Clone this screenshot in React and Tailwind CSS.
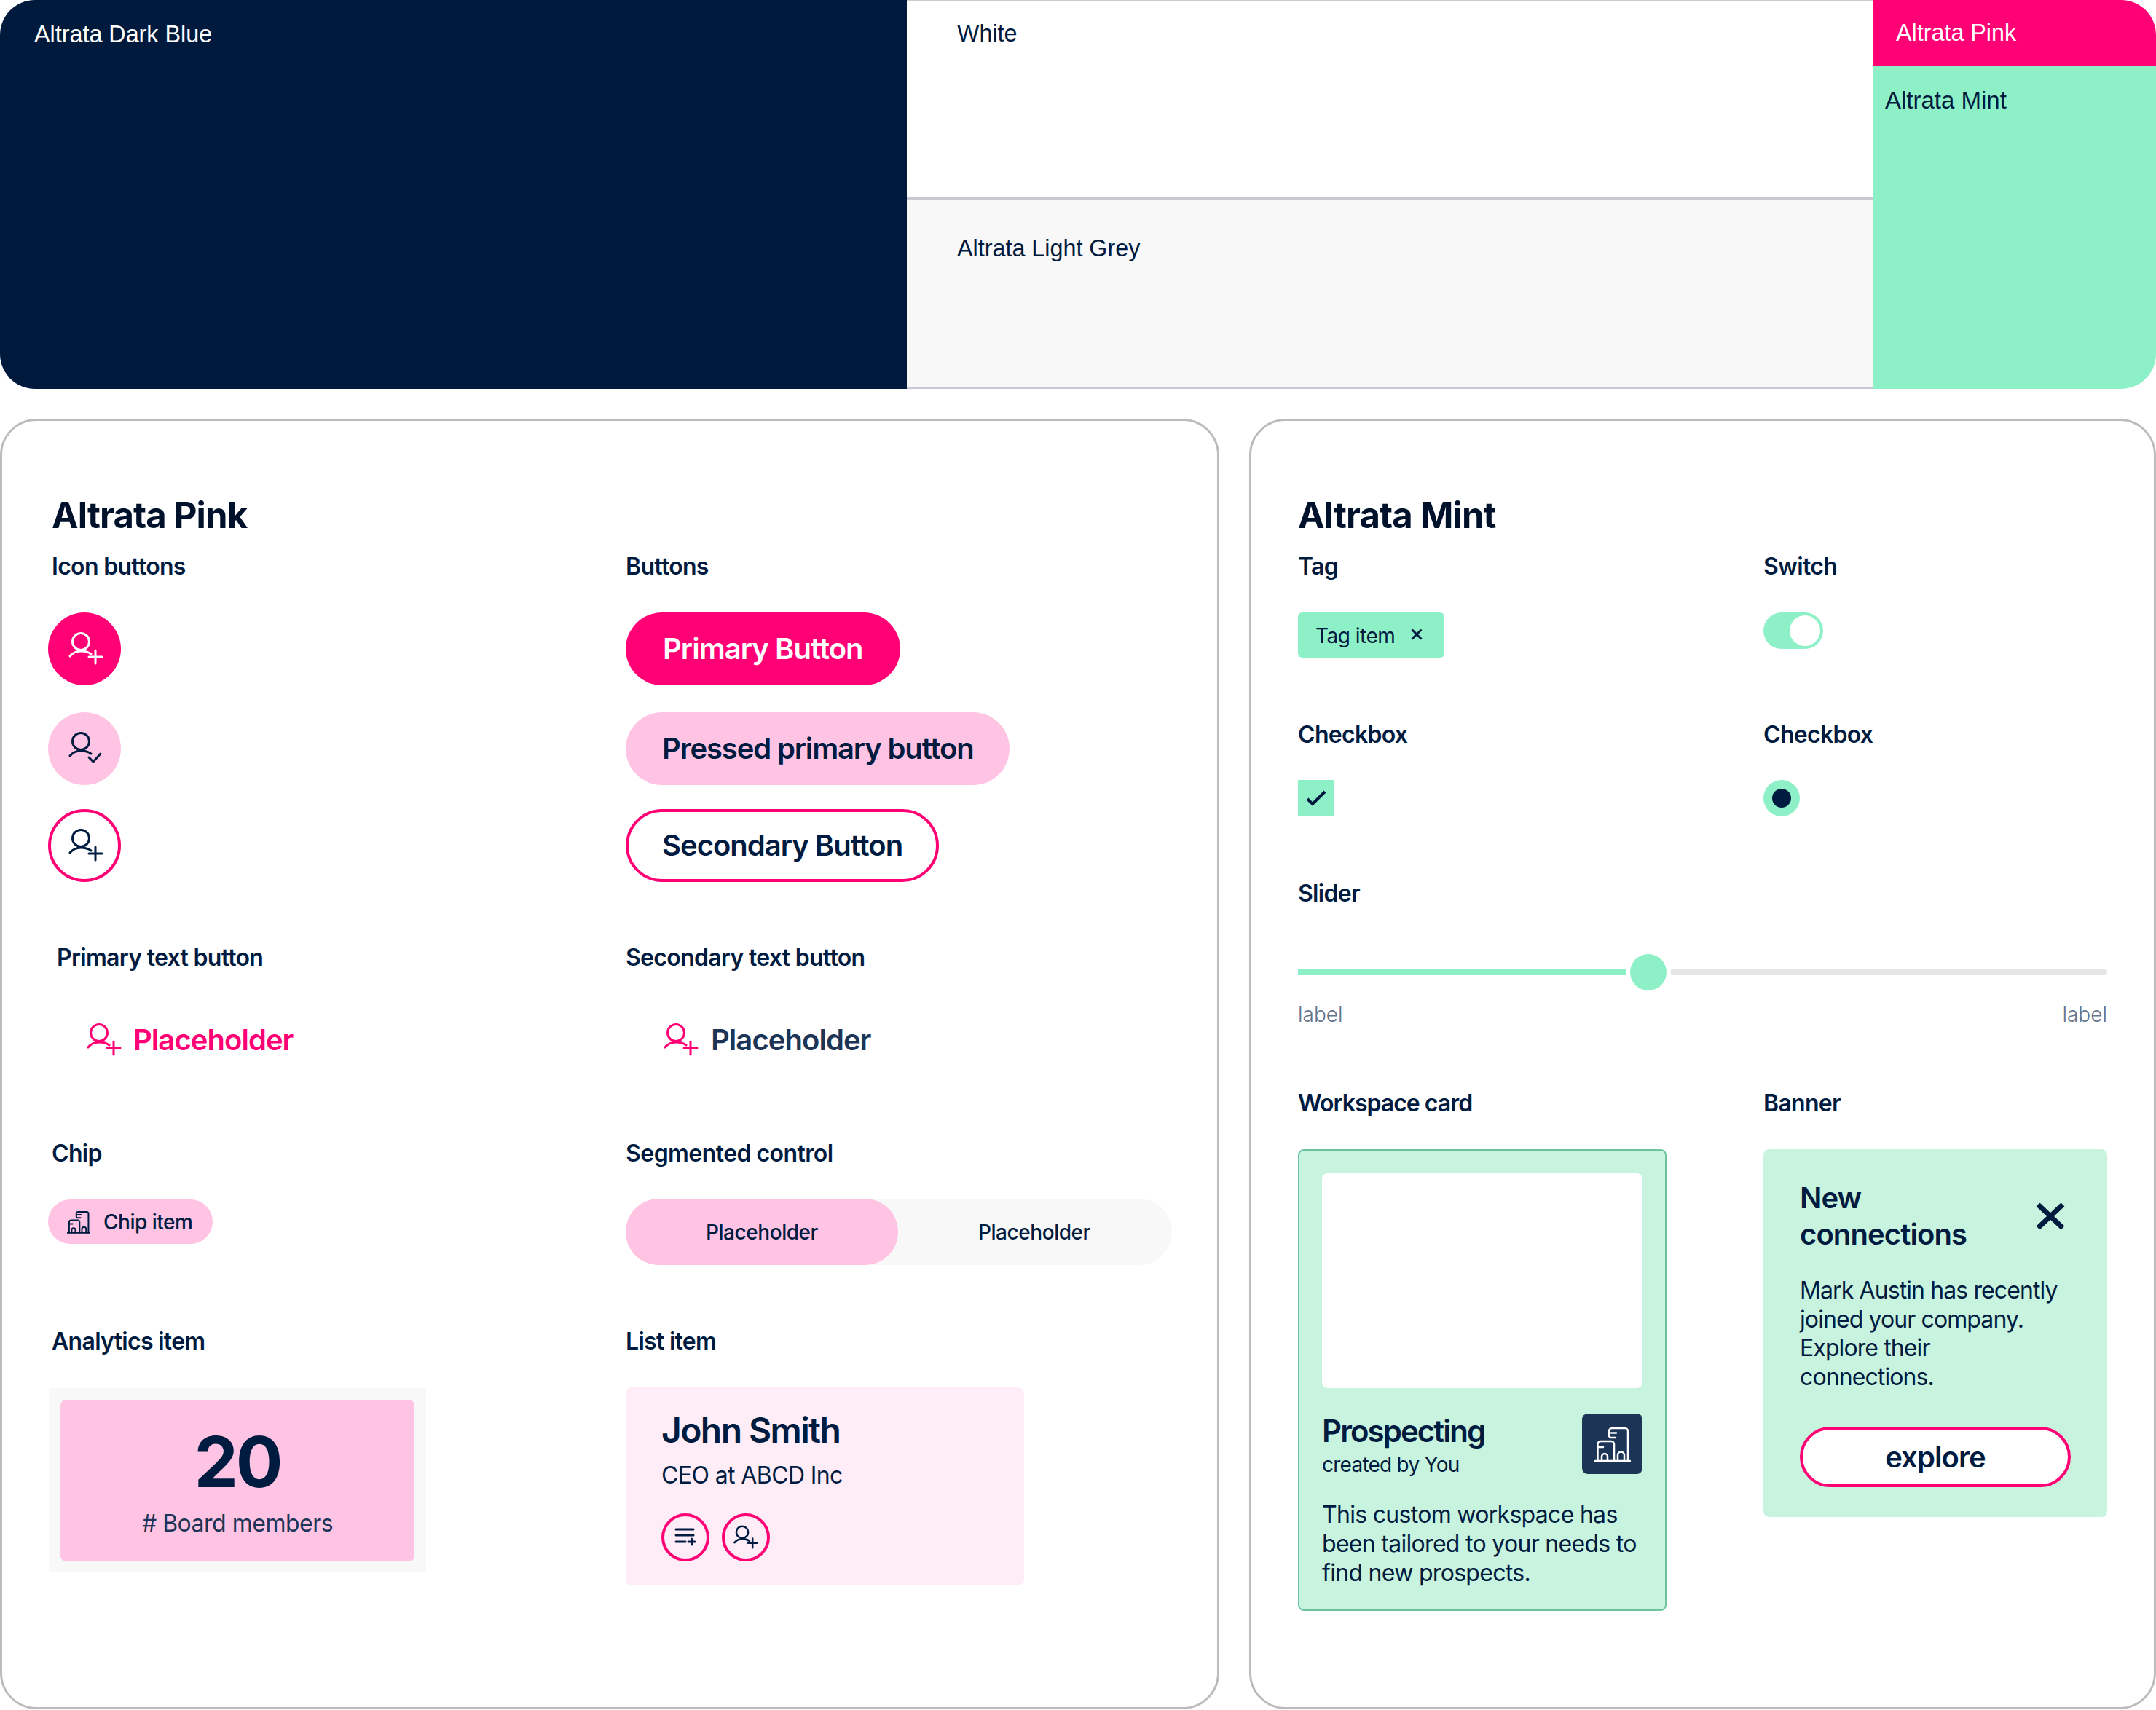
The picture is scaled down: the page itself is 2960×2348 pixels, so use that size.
import React from "react";

const UserIcon = ({ size = 48, check = false, className = "" }) => (
  <svg width={size} height={size} viewBox="0 0 48 48" fill="none" stroke="currentColor" strokeWidth="3" strokeLinecap="round" strokeLinejoin="round" className={className}>
    <circle cx="17" cy="14" r="11.5" />
    <path d="M2 34C6 29 11 27 17 27C22 27 27 28 31 31" />
    {check ? <path d="M28 36L34 42L44 31" /> : <path d="M28 35H46M37 26V44" />}
  </svg>
);

const BuildingIcon = ({ size = 50, strokeWidth = 2.5 }) => (
  <svg width={size} height={size} viewBox="0 0 50 50" fill="none" stroke="currentColor" strokeWidth={strokeWidth} strokeLinecap="round" strokeLinejoin="round">
    <path d="M1 48H49" />
    <path d="M46 48V7a4 4 0 0 0-4-4H24a4 4 0 0 0-4 4V13a3 3 0 0 0 3 3H29M23 9.500H30" />
    <path d="M4.500 48V25a4 4 0 0 1 4-4H23a4 4 0 0 1 4 4V48M5 29H12" />
    <path d="M10 48V42a4 4 0 0 1 8 0V48M32 48V40a4.500 4.500 0 0 1 9 0V48" />
  </svg>
);

const Label = ({ children, className = "" }) => (
  <div className={`h-[40px] text-[32px] leading-[40px] font-semibold tracking-[-0.7px] text-[#001b40] whitespace-nowrap ${className}`}>{children}</div>
);

const Title = ({ children }) => (
  <h2 className="h-[56px] text-[49px] leading-[56px] font-bold tracking-[-0.85px] text-[#00112b] mb-[22px]">{children}</h2>
);

const PillButton = ({ children, className = "" }) => (
  <div className={`h-[100px] w-fit flex items-center rounded-full text-[40px] font-semibold whitespace-nowrap ${className}`}>{children}</div>
);

const IconCircle = ({ className = "", children }) => (
  <div className={`w-[100px] h-[100px] rounded-full flex items-center justify-center ${className}`}>{children}</div>
);

const SmallCircle = ({ children }) => (
  <div className="w-[66px] h-[66px] rounded-full border-[4px] border-[#ff0075] flex items-center justify-center text-[#001b40]">{children}</div>
);

const PinkPanel = () => (
  <section className="w-[1674px] h-[1772px] border-[3px] border-[#bcbcbc] rounded-[50px] pt-[102px] pl-[63px]">
    <div className="pl-[5px]">
      <Title>Altrata Pink</Title>
    </div>
    <div className="grid grid-cols-[793px_1fr] grid-rows-[537px_269px_258px_auto]">
      <div>
        <Label className="pl-[5px]">Icon buttons</Label>
        <div className="mt-[43px] flex flex-col">
          <IconCircle className="bg-[#ff0075] text-white">
            <UserIcon className="ml-[3px]" />
          </IconCircle>
          <IconCircle className="mt-[37px] bg-[#ffc4e3] text-[#001b40]">
            <UserIcon check className="ml-[3px]" />
          </IconCircle>
          <IconCircle className="mt-[33px] border-[4px] border-[#ff0075] text-[#001b40]">
            <UserIcon className="ml-[3px]" />
          </IconCircle>
        </div>
      </div>
      <div>
        <Label>Buttons</Label>
        <div className="mt-[43px] flex flex-col">
          <PillButton className="px-[51px] tracking-[-0.95px] bg-[#ff0075] text-white">Primary Button</PillButton>
          <PillButton className="mt-[37px] px-[50px] tracking-[-1.15px] bg-[#ffc4e3] text-[#001b40]">Pressed primary button</PillButton>
          <PillButton className="mt-[33px] px-[46px] tracking-[-1px] border-[4px] border-[#ff0075] text-[#001b40]">Secondary Button</PillButton>
        </div>
      </div>

      <div>
        <Label className="pl-[12px]">Primary text button</Label>
        <div className="mt-[69px] h-[48px] pl-[53px] flex items-center gap-[16px] text-[#ff0075]">
          <UserIcon />
          <span className="text-[40px] leading-[48px] font-semibold tracking-[-0.95px]">Placeholder</span>
        </div>
      </div>
      <div>
        <Label>Secondary text button</Label>
        <div className="mt-[69px] h-[48px] pl-[52px] flex items-center gap-[17px] text-[#ff0075]">
          <UserIcon />
          <span className="text-[40px] leading-[48px] font-semibold tracking-[-0.95px] text-[#1c3557]">Placeholder</span>
        </div>
      </div>

      <div>
        <Label className="pl-[5px]">Chip</Label>
        <div className="mt-[43px] w-[226px] h-[61px] rounded-full bg-[#ffc4e3] pl-[26px] flex items-center gap-[18px] text-[#001b40]">
          <BuildingIcon size={32} strokeWidth={3.2} />
          <span className="text-[28px] font-medium tracking-[-0.5px] whitespace-nowrap">Chip item</span>
        </div>
      </div>
      <div>
        <Label className="tracking-[-0.55px]">Segmented control</Label>
        <div className="mt-[42px] w-[750px] h-[91px] rounded-full bg-[#f8f8f8] flex text-[28px] font-medium tracking-[-0.45px] text-[#001b40]">
          <div className="w-[374px] rounded-full bg-[#ffc4e3] flex items-center justify-center">Placeholder</div>
          <div className="w-[374px] flex items-center justify-center">Placeholder</div>
        </div>
      </div>

      <div>
        <Label className="pl-[5px]">Analytics item</Label>
        <div className="mt-[44px] ml-[1px] w-[518px] h-[253px] bg-[#f8f8f8] p-[16px]">
          <div className="h-[222px] rounded-[8px] bg-[#ffc4e3] flex flex-col items-center text-[#001b40]">
            <div className="mt-[30px] h-[110px] text-[96px] leading-[110px] font-bold tracking-[-3px]">20</div>
            <div className="mt-[10px] text-[32px] leading-[40px] tracking-[-0.5px] text-[#1c3557]">{"# Board members"}</div>
          </div>
        </div>
      </div>
      <div>
        <Label>List item</Label>
        <div className="mt-[43px] w-[547px] h-[272px] rounded-[8px] bg-[#feecf7] pt-[32px] pl-[49px] text-[#001b40]">
          <div className="h-[54px] text-[48px] leading-[54px] font-semibold tracking-[-1.6px]">John Smith</div>
          <div className="mt-[15px] h-[40px] text-[32px] leading-[40px] tracking-[-0.6px]">CEO at ABCD Inc</div>
          <div className="mt-[32px] flex gap-[17px]">
            <SmallCircle>
              <svg width="32" height="28" viewBox="0 0 32 28" fill="none" stroke="currentColor" strokeWidth="3" strokeLinecap="round">
                <path d="M3 3H27M3 11H27M3 20H16M20 20H29M24.500 16V24" />
              </svg>
            </SmallCircle>
            <SmallCircle>
              <UserIcon size={34} className="[stroke-width:3.6px]" />
            </SmallCircle>
          </div>
        </div>
      </div>
    </div>
  </section>
);

const MintPanel = () => (
  <section className="w-[1245px] h-[1772px] border-[3px] border-[#bcbcbc] rounded-[50px] pt-[102px] pl-[64px]">
    <Title>Altrata Mint</Title>
    <div className="grid grid-cols-[639px_1fr] grid-rows-[231px_218px_288px_auto]">
      <div>
        <Label>Tag</Label>
        <div className="mt-[43px] w-[201px] h-[62px] rounded-[6px] bg-[#8ef0c6] pl-[24px] flex items-center gap-[22px] text-[#001b40]">
          <span className="mt-[2px] text-[28px] tracking-[-0.5px] whitespace-nowrap">Tag item</span>
          <svg width="16" height="16" viewBox="0 0 16 16" fill="none" stroke="currentColor" strokeWidth="3" className="-mt-[2px]">
            <path d="M1.500 1.500L14.500 14.500M14.500 1.500L1.500 14.500" />
          </svg>
        </div>
      </div>
      <div>
        <Label>Switch</Label>
        <div className="mt-[43px] w-[82px] h-[50px] rounded-full bg-[#8ef0c6] flex items-center justify-end pr-[4px]">
          <div className="w-[42px] h-[42px] rounded-full bg-white"></div>
        </div>
      </div>

      <div>
        <Label>Checkbox</Label>
        <div className="mt-[42px] w-[50px] h-[50px] bg-[#8ef0c6] flex items-center justify-center text-[#001b40]">
          <svg width="30" height="24" viewBox="0 0 30 24" fill="none" stroke="currentColor" strokeWidth="4">
            <path d="M3 13L10 20L27 3" />
          </svg>
        </div>
      </div>
      <div>
        <Label>Checkbox</Label>
        <div className="mt-[42px] w-[50px] h-[50px] rounded-full bg-[#8ef0c6] flex items-center justify-center">
          <div className="w-[26px] h-[26px] rounded-full bg-[#001b40]"></div>
        </div>
      </div>

      <div className="col-span-2 w-[1111px]">
        <Label>Slider</Label>
        <div className="mt-[63px] flex items-center gap-[6px]">
          <div className="w-[450px] h-[8px] bg-[#8ef0c6]"></div>
          <div className="w-[50px] h-[50px] rounded-full bg-[#8ef0c6]"></div>
          <div className="flex-1 h-[8px] rounded-r-full bg-[#e5e5e8]"></div>
        </div>
        <div className="mt-[15px] h-[36px] flex justify-between text-[28px] leading-[36px] font-light text-[#64748b]">
          <span>label</span>
          <span>label</span>
        </div>
      </div>

      <div>
        <Label className="tracking-[-1px]">Workspace card</Label>
        <div className="mt-[43px] w-[506px] h-[634px] rounded-[8px] border-[2px] border-[#6dc2a0] bg-[#c8f3de] px-[31px] pt-[31px] text-[#001b40]">
          <div className="h-[295px] rounded-[8px] bg-white"></div>
          <div className="mt-[35px] flex justify-between">
            <div>
              <div className="mt-[-1px] h-[50px] text-[42px] leading-[50px] font-semibold tracking-[-1.95px]">Prospecting</div>
              <div className="mt-[3px] h-[36px] text-[28px] leading-[36px] tracking-[-0.75px]">created by You</div>
            </div>
            <div className="w-[83px] h-[83px] rounded-[8px] bg-[#1c3557] text-white flex items-center justify-center">
              <BuildingIcon />
            </div>
          </div>
          <p className="mt-[31px] text-[32px] leading-[40px] tracking-[-0.7px] whitespace-nowrap">
            This custom workspace has
            <br />
            been tailored to your needs to
            <br />
            find new prospects.
          </p>
        </div>
      </div>
      <div>
        <Label>Banner</Label>
        <div className="mt-[43px] w-[472px] h-[505px] rounded-[8px] bg-[#c8f3de] px-[50px] pt-[42px] text-[#001b40]">
          <div className="flex items-center justify-between">
            <div className="text-[40px] leading-[50px] font-semibold tracking-[-0.9px]">
              New
              <br />
              connections
            </div>
            <svg width="40" height="36" viewBox="0 0 40 36" fill="none" stroke="currentColor" strokeWidth="7" className="mr-[8px]">
              <path d="M3 2L37 34M37 2L3 34" />
            </svg>
          </div>
          <p className="mt-[32px] text-[32px] leading-[39.500px] tracking-[-0.9px] whitespace-nowrap">
            Mark Austin has recently
            <br />
            joined your company.
            <br />
            Explore their
            <br />
            connections.
          </p>
          <div className="mt-[49px] w-[372px] h-[83px] rounded-full border-[4px] border-[#ff0075] bg-white flex items-center justify-center text-[40px] font-semibold tracking-[-0.9px]">
            explore
          </div>
        </div>
      </div>
    </div>
  </section>
);

export default function App() {
  return (
    <div className="w-[2960px] h-[2348px] bg-white [font-family:Inter,sans-serif]">
      <div className="h-[534px] flex rounded-[48px] overflow-hidden text-[32.300px] leading-[40px] [font-family:'Liberation_Sans',sans-serif]">
        <div className="w-[1245px] bg-[#001a3e] text-white pl-[47px] pt-[27px]">Altrata Dark Blue</div>
        <div className="w-[1326px] flex flex-col text-[#001a3e]">
          <div className="h-[275px] bg-white border-t-[2px] border-b-[4px] border-[#c9cad1] pl-[69px] pt-[24px]">White</div>
          <div className="flex-1 bg-[#f8f8f8] border-b-[2px] border-[#c9cad1] pl-[69px] pt-[46px]">Altrata Light Grey</div>
        </div>
        <div className="flex-1 flex flex-col">
          <div className="h-[91px] bg-[#ff0075] text-white pl-[32px] pt-[25px]">Altrata Pink</div>
          <div className="flex-1 bg-[#8ef0c6] text-[#001a3e] pl-[17px] pt-[27px] text-[33px]">Altrata Mint</div>
        </div>
      </div>
      <div className="mt-[41px] flex gap-[41px]">
        <PinkPanel />
        <MintPanel />
      </div>
    </div>
  );
}
